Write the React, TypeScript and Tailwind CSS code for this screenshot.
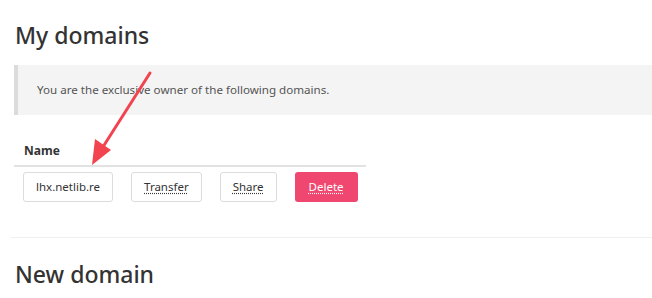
const font = { fontFamily: '"Noto Sans", "Open Sans", sans-serif' };

function Button({ children, danger }: { children: React.ReactNode; danger?: boolean }) {
  return (
    <button
      className={
        danger
          ? 'h-[30px] px-[14px] rounded-[3px] bg-[#ef4770] text-white text-[11.5px]'
          : 'h-[30px] px-[12px] rounded-[3px] border border-[#dcdcdc] bg-white text-[#333] text-[11.5px]'
      }
    >
      {children}
    </button>
  );
}

export default function App() {
  return (
    <div className="relative w-[652px] h-[298px] bg-white overflow-hidden text-[#333]" style={font}>
      <div className="pl-[14px] pt-[19px]">
        <h1 className="text-[23px] leading-[32px] font-medium text-[#333] pl-[1px]">My domains</h1>

        <div className="mt-[14px] h-[50px] flex items-center bg-[#f4f4f4] border-l-[4px] border-[#dcdcdc] pl-[19px]">
          <p className="text-[11.6px] text-[#555]">You are the exclusive owner of the following domains.</p>
        </div>

        <table className="mt-[24px] w-[352px] text-[12px]">
          <thead>
            <tr className="border-b-2 border-[#e2e2e2]">
              <th className="text-left font-bold pl-[10px] pt-[3px] pb-[5px] text-[12px]">Name</th>
            </tr>
          </thead>
          <tbody>
            <tr>
              <td className="pl-[9px] pt-[5px]">
                <div className="flex gap-[18px]">
                  <Button>lhx.netlib.re</Button>
                  <Button><span className="underline decoration-dotted underline-offset-2">Transfer</span></Button>
                  <Button><span className="underline decoration-dotted underline-offset-2">Share</span></Button>
                  <Button danger><span className="underline decoration-dotted underline-offset-2">Delete</span></Button>
                </div>
              </td>
            </tr>
          </tbody>
        </table>
      </div>

      <hr className="mt-[35px] ml-[11px] border-t border-[#efefef]" />

      <h2 className="pl-[15px] mt-[20px] text-[23px] leading-[32px] font-medium text-[#333]">New domain</h2>

      {/* annotation arrow */}
      <svg className="absolute left-0 top-0 pointer-events-none" width="652" height="298">
        <line x1="150" y1="73" x2="101" y2="150" stroke="#f2444f" strokeWidth="3" strokeLinecap="round" />
        <polygon points="92,165 95,139 111,150" fill="#f2444f" />
      </svg>
    </div>
  );
}
